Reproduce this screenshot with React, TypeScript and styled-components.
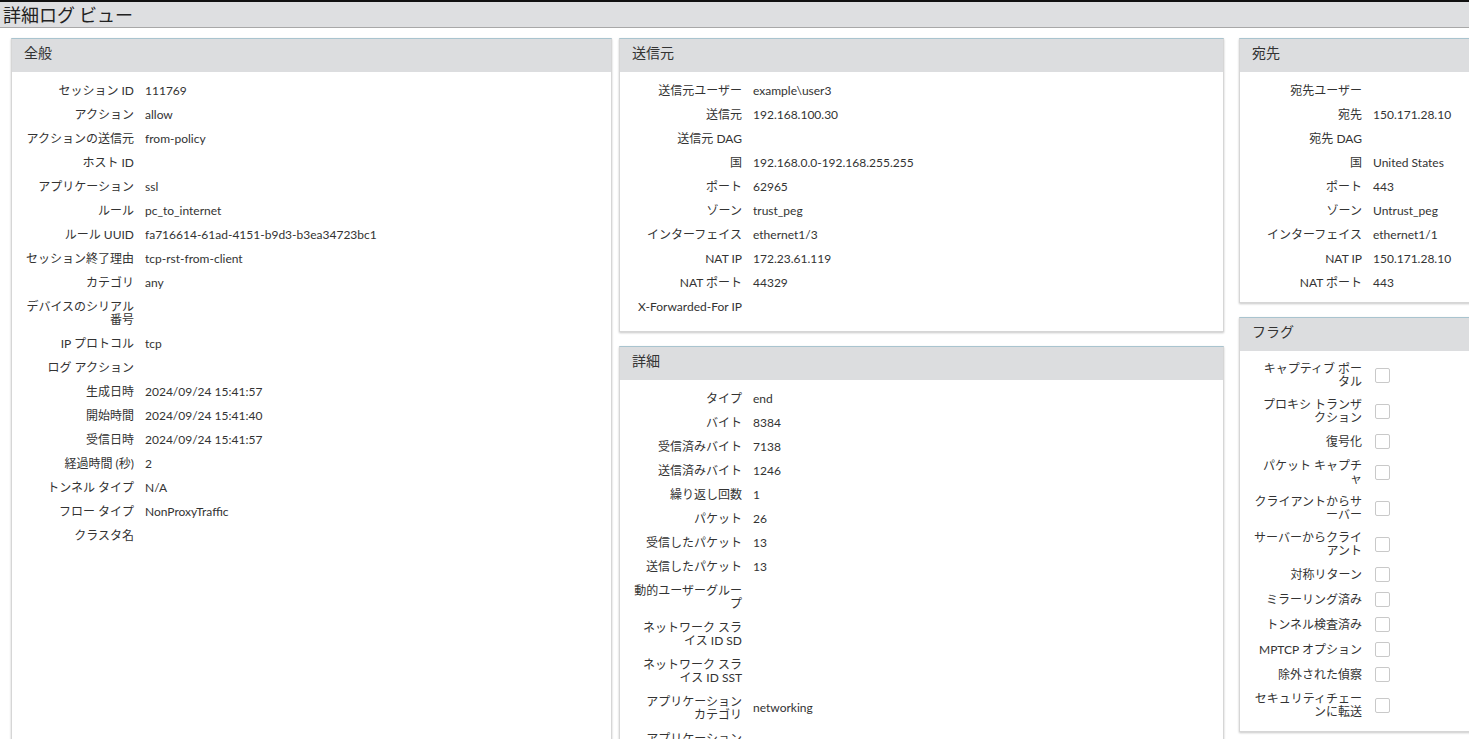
import React from 'react';
import styled, { createGlobalStyle } from 'styled-components';

const GlobalStyle = createGlobalStyle`
  html, body {
    margin: 0;
    padding: 0;
    background: #ffffff;
    overflow: hidden;
  }
  body {
    font-family: Lato, "Noto Sans CJK JP", sans-serif;
    color: #333333;
  }
`;

const Page = styled.div`
  width: 1469px;
  height: 739px;
  border-top: 2px solid #111111;
  box-sizing: border-box;
  overflow: hidden;
`;

const TitleBar = styled.div`
  height: 26px;
  background: #dedfe1;
  border-bottom: 1px solid #a8a8a8;
  display: flex;
  align-items: center;
  padding: 0 0 2px 3px;
  box-sizing: border-box;
  font-size: 18px;
  color: #222222;
  font-family: "Noto Sans CJK JP", sans-serif;
`;

const Columns = styled.div`
  display: grid;
  grid-template-columns: 601px 605px 240px;
  column-gap: 7px;
  padding: 10px 0 0 11px;
  align-items: start;
`;

const Column = styled.div<{ $shift?: number }>`
  display: flex;
  flex-direction: column;
  gap: 14px;
  margin-left: ${(p) => p.$shift ?? 0}px;
`;

const Panel = styled.section<{ $tall?: boolean }>`
  background: #ffffff;
  border: 1px solid #d6d6d6;
  border-top-color: #a9c4cf;
  box-shadow: 0 1px 2px rgba(0, 0, 0, 0.22);
  min-height: ${(p) => (p.$tall ? '760px' : 'auto')};
`;

const PanelHeader = styled.div`
  height: 33px;
  box-sizing: border-box;
  background: #dcdddf;
  padding: 4px 0 0 12px;
  font-size: 14px;
  line-height: 20px;
  color: #333333;
`;

const PanelBody = styled.div<{ $pb?: number }>`
  padding: 6px 0 ${(p) => p.$pb ?? 8}px 0;
`;

const Row = styled.div`
  display: grid;
  grid-template-columns: 110px 1fr;
  column-gap: 11px;
  align-items: center;
  padding: 5.5px 0 5.5px 12px;
  font-size: 12px;
  line-height: 13px;
`;

const Label = styled.div`
  text-align: right;
  color: #333333;
  word-break: break-all;
`;

const Value = styled.div`
  color: #333333;
  white-space: nowrap;
`;

const FlagRow = styled(Row)`
  column-gap: 13px;
  padding: 5px 0 5px 12px;
`;

const CheckBox = styled.span`
  display: block;
  width: 13px;
  height: 13px;
  border: 1px solid #c9c9c9;
  border-radius: 2px;
  background: #ffffff;
`;

type Item = [string, string];

const general: Item[] = [
  ['セッション ID', '111769'],
  ['アクション', 'allow'],
  ['アクションの送信元', 'from-policy'],
  ['ホスト ID', ''],
  ['アプリケーション', 'ssl'],
  ['ルール', 'pc_to_internet'],
  ['ルール UUID', 'fa716614-61ad-4151-b9d3-b3ea34723bc1'],
  ['セッション終了理由', 'tcp-rst-from-client'],
  ['カテゴリ', 'any'],
  ['デバイスのシリアル番号', ''],
  ['IP プロトコル', 'tcp'],
  ['ログ アクション', ''],
  ['生成日時', '2024/09/24 15:41:57'],
  ['開始時間', '2024/09/24 15:41:40'],
  ['受信日時', '2024/09/24 15:41:57'],
  ['経過時間 (秒)', '2'],
  ['トンネル タイプ', 'N/A'],
  ['フロー タイプ', 'NonProxyTraffic'],
  ['クラスタ名', ''],
];

const source: Item[] = [
  ['送信元ユーザー', 'example\\user3'],
  ['送信元', '192.168.100.30'],
  ['送信元 DAG', ''],
  ['国', '192.168.0.0-192.168.255.255'],
  ['ポート', '62965'],
  ['ゾーン', 'trust_peg'],
  ['インターフェイス', 'ethernet1/3'],
  ['NAT IP', '172.23.61.119'],
  ['NAT ポート', '44329'],
  ['X-Forwarded-For IP', ''],
];

const details: Item[] = [
  ['タイプ', 'end'],
  ['バイト', '8384'],
  ['受信済みバイト', '7138'],
  ['送信済みバイト', '1246'],
  ['繰り返し回数', '1'],
  ['パケット', '26'],
  ['受信したパケット', '13'],
  ['送信したパケット', '13'],
  ['動的ユーザーグループ', ''],
  ['ネットワーク スライス ID SD', ''],
  ['ネットワーク スライス ID SST', ''],
  ['アプリケーション カテゴリ', 'networking'],
  ['アプリケーション サブカテゴリ', 'infrastructure'],
];

const destination: Item[] = [
  ['宛先ユーザー', ''],
  ['宛先', '150.171.28.10'],
  ['宛先 DAG', ''],
  ['国', 'United States'],
  ['ポート', '443'],
  ['ゾーン', 'Untrust_peg'],
  ['インターフェイス', 'ethernet1/1'],
  ['NAT IP', '150.171.28.10'],
  ['NAT ポート', '443'],
];

const flags = [
  'キャプティブ ポータル',
  'プロキシ トランザクション',
  '復号化',
  'パケット キャプチャ',
  'クライアントからサーバー',
  'サーバーからクライアント',
  '対称リターン',
  'ミラーリング済み',
  'トンネル検査済み',
  'MPTCP オプション',
  '除外された偵察',
  'セキュリティチェーンに転送',
];

const Fields = ({ items }: { items: Item[] }) => (
  <>
    {items.map(([label, value]) => (
      <Row key={label}>
        <Label>{label}</Label>
        <Value>{value}</Value>
      </Row>
    ))}
  </>
);

export default function App() {
  return (
    <>
      <GlobalStyle />
      <Page>
        <TitleBar>詳細ログ ビュー</TitleBar>
        <Columns>
          <Column>
            <Panel $tall>
              <PanelHeader>全般</PanelHeader>
              <PanelBody>
                <Fields items={general} />
              </PanelBody>
            </Panel>
          </Column>
          <Column>
            <Panel>
              <PanelHeader>送信元</PanelHeader>
              <PanelBody $pb={13}>
                <Fields items={source} />
              </PanelBody>
            </Panel>
            <Panel>
              <PanelHeader>詳細</PanelHeader>
              <PanelBody>
                <Fields items={details} />
              </PanelBody>
            </Panel>
          </Column>
          <Column $shift={8}>
            <Panel>
              <PanelHeader>宛先</PanelHeader>
              <PanelBody>
                <Fields items={destination} />
              </PanelBody>
            </Panel>
            <Panel>
              <PanelHeader>フラグ</PanelHeader>
              <PanelBody>
                {flags.map((f) => (
                  <FlagRow key={f}>
                    <Label>{f}</Label>
                    <CheckBox />
                  </FlagRow>
                ))}
              </PanelBody>
            </Panel>
          </Column>
        </Columns>
      </Page>
    </>
  );
}
